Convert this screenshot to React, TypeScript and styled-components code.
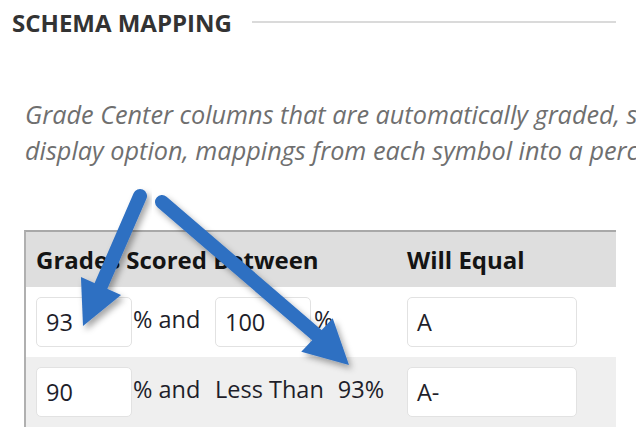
import React from "react";
import styled, { createGlobalStyle } from "styled-components";

const Global = createGlobalStyle`
  html, body { margin: 0; padding: 0; background: #ffffff; overflow: hidden; }
  body { font-family: "Open Sans", "Liberation Sans", sans-serif; }
`;

const Page = styled.div`
  position: relative;
  width: 636px;
  height: 442px;
  overflow: hidden;
  box-sizing: border-box;
  padding: 6px 20px 0 12px;
`;

const TitleRow = styled.div`
  display: flex;
  align-items: center;
  gap: 20px;
  height: 32px;
`;

const Title = styled.h2`
  margin: 0;
  font-size: 24px;
  font-weight: 700;
  color: #333333;
  white-space: nowrap;
`;

const Rule = styled.div`
  flex: 1;
  height: 0;
  border-top: 2px solid #dadada;
`;

const Intro = styled.p`
  margin: 58px 0 0 13px;
  width: 1100px;
  font-size: 25.25px;
  line-height: 36px;
  font-style: italic;
  color: #6f6f6f;
`;

const Line = styled.span`
  display: block;
  white-space: nowrap;
`;

const Table = styled.div`
  margin: 62px 0 0 12px;
  border-left: 2px solid #b0b0b0;
  border-top: 2px solid #a8a8a8;
`;

const Row = styled.div<{ $bg: string; $h: number }>`
  display: grid;
  grid-template-columns: 371px 1fr;
  align-items: center;
  height: ${(p) => p.$h}px;
  background: ${(p) => p.$bg};
`;

const HeadCell = styled.div`
  padding-left: 10px;
  font-size: 24px;
  font-weight: 700;
  color: #141414;
  white-space: nowrap;
`;

const Cell = styled.div`
  display: flex;
  align-items: center;
  padding-left: 10px;
  font-size: 23.5px;
  color: #1e1e2a;
`;

const Field = styled.div<{ $w: number }>`
  box-sizing: border-box;
  width: ${(p) => p.$w}px;
  height: 50px;
  background: #ffffff;
  border: 1px solid #e2e2e2;
  border-radius: 5px;
  padding-left: 9px;
  display: flex;
  align-items: center;
  font-size: 23.5px;
  color: #1e1e2a;
`;

const Label = styled.span<{ $w?: number; $gap?: number }>`
  display: inline-block;
  width: ${(p) => (p.$w ? `${p.$w}px` : "auto")};
  margin-left: ${(p) => p.$gap ?? 0}px;
  margin-top: -6px;
  white-space: nowrap;
`;

const Overlay = styled.svg`
  position: absolute;
  left: 0;
  top: 0;
  pointer-events: none;
`;

function Arrow({
  tail,
  base,
  tip,
  half,
}: {
  tail: [number, number];
  base: [number, number];
  tip: [number, number];
  half: number;
}) {
  const dx = tip[0] - base[0];
  const dy = tip[1] - base[1];
  const len = Math.hypot(dx, dy);
  const px = (-dy / len) * half;
  const py = (dx / len) * half;
  const pts = `${base[0] + px},${base[1] + py} ${tip[0]},${tip[1]} ${base[0] - px},${base[1] - py}`;
  return (
    <g filter="url(#shadow)">
      <line
        x1={tail[0]}
        y1={tail[1]}
        x2={base[0] + dx * 0.1}
        y2={base[1] + dy * 0.1}
        stroke="#2f70c2"
        strokeWidth={14}
        strokeLinecap="round"
      />
      <polygon points={pts} fill="#2f70c2" />
    </g>
  );
}

export default function App() {
  return (
    <>
      <Global />
      <Page>
        <TitleRow>
          <Title>SCHEMA MAPPING</Title>
          <Rule />
        </TitleRow>
        <Intro>
          <Line>
            Grade Center columns that are automatically graded, such as tests, are calculated as a
            percentage. For columns with a letter
          </Line>
          <Line>
            display option, mappings from each symbol into a percentage are used to determine the
            grade.
          </Line>
        </Intro>
        <Table>
          <Row $bg="#dedede" $h={55}>
            <HeadCell>Grades Scored Between</HeadCell>
            <HeadCell>Will Equal</HeadCell>
          </Row>
          <Row $bg="#ffffff" $h={70}>
            <Cell>
              <Field $w={96}>93</Field>
              <Label $w={82} $gap={1}>% and</Label>
              <Field $w={96}>100</Field>
              <Label $gap={3}>%</Label>
            </Cell>
            <Cell>
              <Field $w={170}>A</Field>
            </Cell>
          </Row>
          <Row $bg="#efefef" $h={70}>
            <Cell>
              <Field $w={96}>90</Field>
              <Label $w={82} $gap={1}>% and</Label>
              <Label>Less Than</Label>
              <Label $gap={14}>93%</Label>
            </Cell>
            <Cell>
              <Field $w={170}>A-</Field>
            </Cell>
          </Row>
        </Table>
        <Overlay width={636} height={442} viewBox="0 0 636 442">
          <defs>
            <filter id="shadow" x="-20%" y="-20%" width="140%" height="140%">
              <feDropShadow dx="3" dy="4" stdDeviation="3" floodColor="#000" floodOpacity="0.35" />
            </filter>
          </defs>
          <Arrow tail={[140, 196]} base={[101, 286]} tip={[83, 326]} half={22} />
          <Arrow tail={[162, 202]} base={[317, 335]} tip={[349, 365]} half={23} />
        </Overlay>
      </Page>
    </>
  );
}
